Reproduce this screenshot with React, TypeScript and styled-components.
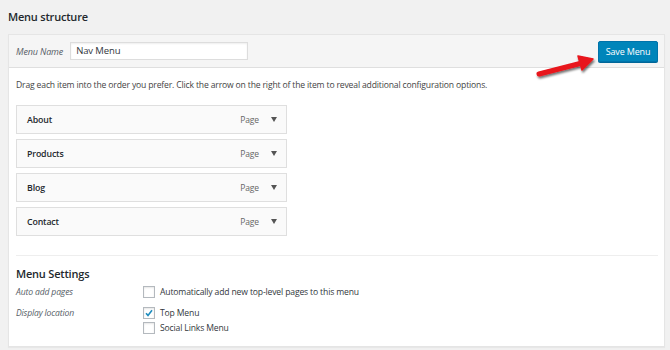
import React from 'react';
import styled, { createGlobalStyle } from 'styled-components';

const Global = createGlobalStyle`
  html, body {
    margin: 0;
    padding: 0;
    background: #f1f1f1;
  }
  body {
    font-family: "Open Sans", "Noto Sans", sans-serif;
    color: #23282d;
  }
`;

const Page = styled.div`
  position: relative;
  width: 670px;
  height: 350px;
  overflow: hidden;
  padding: 0 5px 0 8px;
  box-sizing: border-box;
`;

const Title = styled.h2`
  margin: 0;
  height: 34px;
  line-height: 34px;
  font-size: 11px;
  font-weight: 600;
  letter-spacing: -0.2px;
`;

const Panel = styled.div`
  border: 1px solid #e5e5e5;
  background: #fff;
  box-shadow: 0 1px 1px rgba(0, 0, 0, 0.04);
  height: 313px;
  box-sizing: border-box;
`;

const Header = styled.div`
  display: flex;
  align-items: center;
  justify-content: space-between;
  height: 32px;
  padding: 0 6px 0 7px;
  background: #f5f5f5;
  border-bottom: 1px solid #dfdfdf;
`;

const NameGroup = styled.label`
  display: flex;
  align-items: center;
  gap: 7px;
`;

const FieldLabel = styled.span`
  font-style: italic;
  font-size: 9px;
  color: #555d66;
  letter-spacing: -0.15px;
`;

const NameInput = styled.div`
  width: 166px;
  height: 16px;
  border: 1px solid #ddd;
  background: #fff;
  box-shadow: inset 0 1px 2px rgba(0, 0, 0, 0.07);
  font-size: 9.5px;
  line-height: 16px;
  padding: 0 5px;
  box-sizing: content-box;
  color: #32373c;
  letter-spacing: -0.1px;
`;

const SaveButton = styled.button`
  width: 60px;
  height: 21px;
  padding: 0;
  background: #0085ba;
  border: 1px solid #0073aa;
  border-radius: 2px;
  box-shadow: 0 1px 0 #006799;
  color: #fff;
  font-family: inherit;
  font-size: 9px;
  letter-spacing: -0.15px;
`;

const Body = styled.div`
  padding: 0 6px 0 7px;
`;

const Instructions = styled.p`
  margin: 0;
  height: 37px;
  line-height: 35px;
  font-size: 8.6px;
  color: #444;
  letter-spacing: -0.16px;
  white-space: nowrap;
`;

const ItemList = styled.ul`
  list-style: none;
  margin: 0;
  padding: 0;
  display: flex;
  flex-direction: column;
  gap: 5px;
  width: 271px;
`;

const Item = styled.li`
  display: flex;
  align-items: center;
  height: 27px;
  border: 1px solid #dfdfdf;
  background: #fafafa;
  padding: 0 9px 0 10px;
`;

const ItemTitle = styled.span`
  flex: 1;
  font-size: 8.8px;
  font-weight: 600;
  color: #23282d;
  letter-spacing: -0.15px;
`;

const ItemType = styled.span`
  font-size: 8.5px;
  color: #666;
  margin-right: 12px;
  letter-spacing: -0.1px;
`;

const Caret = styled.span`
  width: 0;
  height: 0;
  border-left: 3.5px solid transparent;
  border-right: 3.5px solid transparent;
  border-top: 5px solid #555;
`;

const Divider = styled.hr`
  margin: 19px 0 0;
  border: 0;
  border-top: 1px solid #eee;
`;

const SettingsTitle = styled.h3`
  margin: 0;
  padding-top: 9px;
  height: 21px;
  line-height: 18px;
  font-size: 11px;
  font-weight: 600;
  letter-spacing: -0.2px;
`;

const SettingRow = styled.div`
  display: grid;
  grid-template-columns: 127px 1fr;
  margin-bottom: 9px;
`;

const SettingLabel = styled.span`
  font-style: italic;
  font-size: 8.6px;
  color: #555d66;
  line-height: 12px;
  letter-spacing: -0.15px;
`;

const Options = styled.div`
  display: flex;
  flex-direction: column;
  gap: 3px;
`;

const Option = styled.label`
  display: flex;
  align-items: center;
  gap: 5px;
  font-size: 8.6px;
  color: #32373c;
  line-height: 12px;
  letter-spacing: -0.15px;
`;

const Box = styled.span`
  position: relative;
  width: 10px;
  height: 10px;
  border: 1px solid #b4b9be;
  background: #fff;
  box-shadow: inset 0 1px 2px rgba(0, 0, 0, 0.1);
`;

const Arrow = styled.svg`
  position: absolute;
  left: 530px;
  top: 48px;
`;

interface CheckProps {
  label: string;
  checked?: boolean;
}

const Check: React.FC<CheckProps> = ({ label, checked }) => (
  <Option>
    <Box>
      {checked && (
        <svg width="10" height="10" viewBox="0 0 10 10" style={{ position: 'absolute', left: 0, top: 0 }}>
          <path d="M2 5.2 L4 7.4 L8 2.2" fill="none" stroke="#1e8cbe" strokeWidth="1.6" />
        </svg>
      )}
    </Box>
    {label}
  </Option>
);

const items = ['About', 'Products', 'Blog', 'Contact'];

export default function App() {
  return (
    <Page>
      <Global />
      <Title>Menu structure</Title>
      <Panel>
        <Header>
          <NameGroup>
            <FieldLabel>Menu Name</FieldLabel>
            <NameInput>Nav Menu</NameInput>
          </NameGroup>
          <SaveButton>Save Menu</SaveButton>
        </Header>
        <Body>
          <Instructions>
            Drag each item into the order you prefer. Click the arrow on the right of the item to reveal additional configuration options.
          </Instructions>
          <ItemList>
            {items.map(name => (
              <Item key={name}>
                <ItemTitle>{name}</ItemTitle>
                <ItemType>Page</ItemType>
                <Caret />
              </Item>
            ))}
          </ItemList>
          <Divider />
          <SettingsTitle>Menu Settings</SettingsTitle>
          <SettingRow>
            <SettingLabel>Auto add pages</SettingLabel>
            <Options>
              <Check label="Automatically add new top-level pages to this menu" />
            </Options>
          </SettingRow>
          <SettingRow>
            <SettingLabel>Display location</SettingLabel>
            <Options>
              <Check label="Top Menu" checked />
              <Check label="Social Links Menu" />
            </Options>
          </SettingRow>
        </Body>
      </Panel>
      <Arrow width="72" height="34" viewBox="0 0 72 34">
        <defs>
          <filter id="sh" x="-20%" y="-40%" width="140%" height="180%">
            <feDropShadow dx="1" dy="2" stdDeviation="1.2" floodColor="#000" floodOpacity="0.55" />
          </filter>
        </defs>
        <g filter="url(#sh)">
          <path d="M9 26 L52 15" stroke="#e8141b" strokeWidth="5" strokeLinecap="round" fill="none" />
          <path d="M48 8 L63 11 L52 22 Z" fill="#e8141b" stroke="#e8141b" strokeWidth="1.5" strokeLinejoin="round" />
        </g>
      </Arrow>
    </Page>
  );
}
